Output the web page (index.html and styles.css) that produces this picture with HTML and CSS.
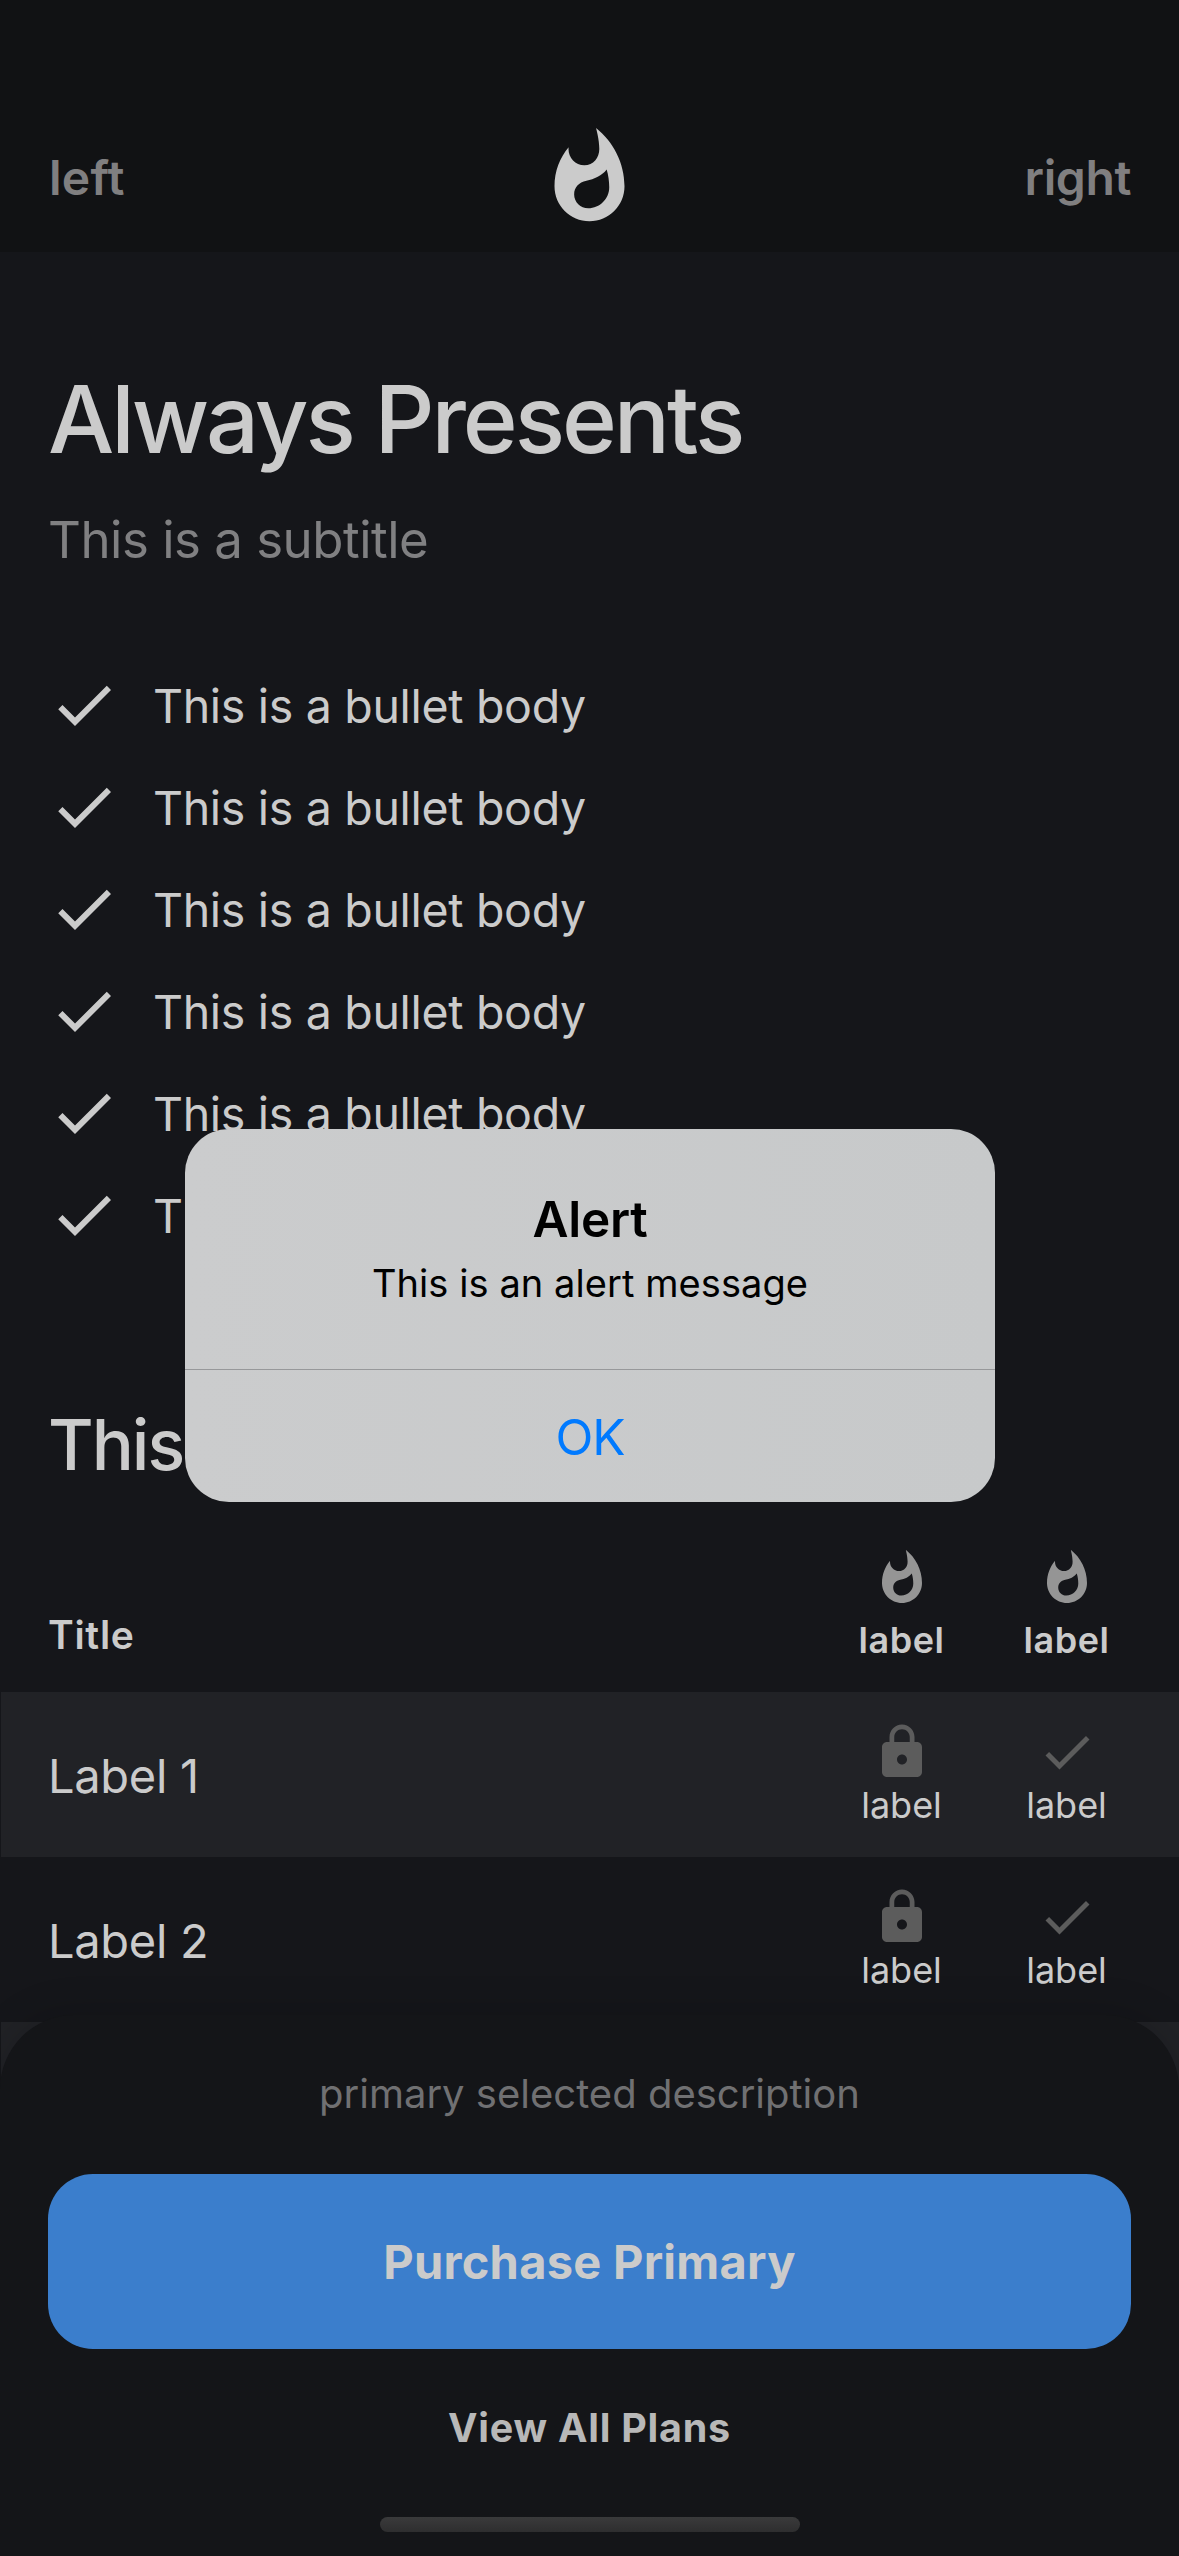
FILE: index.html
```html
<!DOCTYPE html>
<html lang="en">
<head>
<meta charset="utf-8">
<title>Always Presents</title>
<link rel="stylesheet" href="styles.css">
</head>
<body>
<svg class="defs" aria-hidden="true">
  <symbol id="flame" viewBox="0 0 24 24"><path d="M13.5.67s.74 2.65.74 4.8c0 2.06-1.35 3.73-3.41 3.73-2.07 0-3.63-1.67-3.63-3.73l.03-.36C5.21 7.51 4 10.62 4 14c0 4.42 3.58 8 8 8s8-3.58 8-8C20 8.61 17.41 3.8 13.5.67zM11.71 19c-1.78 0-3.22-1.4-3.22-3.14 0-1.62 1.05-2.76 2.81-3.12 1.77-.36 3.6-1.21 4.62-2.58.39 1.29.59 2.65.59 4.04 0 2.65-2.15 4.8-4.8 4.8z"/></symbol>
  <symbol id="check" viewBox="0 0 24 24"><path d="M9 16.17 4.83 12l-1.42 1.41L9 19 21 7l-1.41-1.41z"/></symbol>
  <symbol id="lock" viewBox="0 0 24 24"><path d="M18 8h-1V6c0-2.76-2.24-5-5-5S7 3.24 7 6v2H6c-1.1 0-2 .9-2 2v10c0 1.1.9 2 2 2h12c1.1 0 2-.9 2-2V10c0-1.1-.9-2-2-2zm-6 9c-1.1 0-2-.9-2-2s.9-2 2-2 2 .9 2 2-.9 2-2 2zm3.1-9H8.9V6c0-1.71 1.39-3.1 3.1-3.1 1.71 0 3.1 1.39 3.1 3.1v2z"/></symbol>
</svg>
<div class="screen">
  <header class="nav">
    <span class="nav-item">left</span>
    <svg class="logo"><use href="#flame"/></svg>
    <span class="nav-item nav-right">right</span>
  </header>

  <main>
    <section class="intro">
      <h1>Always Presents</h1>
      <p class="subtitle">This is a subtitle</p>
      <ul class="bullets">
        <li><svg class="bullet-icon"><use href="#check"/></svg><span>This is a bullet body</span></li>
        <li><svg class="bullet-icon"><use href="#check"/></svg><span>This is a bullet body</span></li>
        <li><svg class="bullet-icon"><use href="#check"/></svg><span>This is a bullet body</span></li>
        <li><svg class="bullet-icon"><use href="#check"/></svg><span>This is a bullet body</span></li>
        <li><svg class="bullet-icon"><use href="#check"/></svg><span>This is a bullet body</span></li>
        <li><svg class="bullet-icon"><use href="#check"/></svg><span>This is a bullet body</span></li>
      </ul>
      <h2>This</h2>
    </section>

    <section class="table">
      <div class="row head">
        <span class="name">Title</span>
        <span class="cell"><svg><use href="#flame"/></svg>label</span>
        <span class="cell"><svg><use href="#flame"/></svg>label</span>
      </div>
      <div class="row shaded">
        <span class="name">Label 1</span>
        <span class="cell"><svg><use href="#lock"/></svg>label</span>
        <span class="cell"><svg><use href="#check"/></svg>label</span>
      </div>
      <div class="row">
        <span class="name">Label 2</span>
        <span class="cell"><svg><use href="#lock"/></svg>label</span>
        <span class="cell"><svg><use href="#check"/></svg>label</span>
      </div>
      <div class="row shaded"></div>
    </section>
  </main>

  <footer class="sheet">
    <p class="desc">primary selected description</p>
    <button class="buy">Purchase Primary</button>
    <a class="plans">View All Plans</a>
    <div class="home"></div>
  </footer>

  <div class="alert" role="alertdialog">
    <div class="alert-body">
      <strong>Alert</strong>
      <p>This is an alert message</p>
    </div>
    <button class="alert-ok">OK</button>
  </div>
</div>
</body>
</html>
```
FILE: styles.css
```css
* { box-sizing: border-box; }

body {
  margin: 0;
  background: #15161a;
  color: #cbcbcb;
  font-family: Inter, "Liberation Sans", sans-serif;
}

h1, h2, p, ul { margin: 0; padding: 0; }
h1, h2 { font-weight: 500; }
svg { display: block; fill: currentColor; }
button { border: 0; font-family: inherit; }

.defs { position: absolute; width: 0; height: 0; }

.screen {
  position: relative;
  width: 1179px;
  height: 2556px;
  overflow: hidden;
}

/* Navigation bar */
.nav {
  display: grid;
  grid-template-columns: 1fr 105px 1fr;
  align-items: center;
  height: 252px;
  padding: 103px 48px 0;
  background: #111214;
}
.logo { width: 105px; height: 105px; }
.nav-item {
  padding-left: 1px;
  color: #807f80;
  font-size: 48px;
  font-weight: 600;
  line-height: 58px;
  letter-spacing: 0.23px;
}
.nav-right { justify-self: end; letter-spacing: -0.4px; }

/* Intro */
.intro { padding: 109px 48px 0; }
h1 {
  font-size: 93.5px;
  line-height: 116px;
  letter-spacing: -3.06px;
}
.subtitle {
  margin-top: 32px;
  color: #808082;
  font-size: 51px;
  line-height: 61px;
  letter-spacing: -0.51px;
}
.bullets {
  display: flex;
  flex-direction: column;
  gap: 30px;
  margin: 99px 0 150px;
  list-style: none;
}
.bullets li {
  display: flex;
  align-items: center;
  gap: 33px;
  height: 72px;
  font-size: 46.5px;
  line-height: 72px;
  letter-spacing: -0.32px;
}
.bullets span { padding-top: 1px; }
.bullet-icon { width: 72px; height: 72px; }
h2 {
  font-size: 70px;
  line-height: 87px;
  letter-spacing: -2px;
}

/* Comparison table */
.table { margin-top: 30px; }
.row {
  display: grid;
  grid-template-columns: 1fr 165px 165px;
  align-items: center;
  height: 165px;
  padding: 0 30px 0 48px;
}
.shaded {
  margin-left: 1px;
  padding-left: 47px;
  background: #212226;
}
.name {
  padding-top: 1px;
  font-size: 47px;
  letter-spacing: -0.3px;
}
.cell {
  display: flex;
  flex-direction: column;
  align-items: center;
  font-size: 36px;
  line-height: 45px;
}
.cell svg { width: 60px; height: 60px; margin-bottom: 1px; color: #5c5c5c; }
.row:not(.head) .cell { padding-top: 1px; }
.head { height: 174px; font-weight: 600; }
.head .name {
  align-self: end;
  padding-bottom: 34px;
  font-size: 39px;
  line-height: 46px;
  letter-spacing: 0.7px;
}
.head .cell { gap: 9px; padding-top: 1px; letter-spacing: 0.5px; }
.head .cell svg { color: #959595; }

/* Purchase sheet, floating over the scrolled table */
.sheet {
  position: absolute;
  inset: 2015px 0 0;
  display: flex;
  flex-direction: column;
  align-items: center;
  padding: 55px 48px 0;
  border-radius: 74px 74px 0 0;
  background: #141518;
  box-shadow: 0 0 40px rgba(0, 0, 0, 0.18);
}
.desc {
  color: #707072;
  font-size: 40px;
  line-height: 48px;
}
.buy {
  width: 1083px;
  height: 175px;
  margin-top: 56px;
  border-radius: 45px;
  background: #3b7ecc;
  color: #cbcbcb;
  font-size: 47px;
  font-weight: 700;
  letter-spacing: 0.26px;
}
.plans {
  margin-top: 55px;
  color: #b8b8b8;
  font-size: 39.5px;
  font-weight: 700;
  line-height: 48px;
  letter-spacing: 0.75px;
}
.home {
  width: 420px;
  height: 15px;
  margin-top: 65px;
  border-radius: 8px;
  background: linear-gradient(#3a3a3b, #2e2e2f);
}

/* Alert dialog */
.alert {
  position: absolute;
  top: 1129px;
  left: 185px;
  width: 810px;
  height: 373px;
  display: flex;
  flex-direction: column;
  overflow: hidden;
  border-radius: 44px;
  background: linear-gradient(90deg, #cbcccd, #c7c9ca);
  color: #000;
  text-align: center;
}
.alert-body {
  height: 241px;
  padding-top: 60px;
  border-bottom: 1px solid #97989a;
}
.alert-body strong {
  display: block;
  font-size: 49.5px;
  font-weight: 600;
  line-height: 60px;
  letter-spacing: -0.3px;
}
.alert-body p {
  margin-top: 10px;
  font-size: 38px;
  line-height: 48px;
  letter-spacing: 0.07px;
}
.alert-ok {
  flex: 1;
  padding: 1px 0 0;
  background: none;
  color: #007aff;
  font-size: 49.5px;
  letter-spacing: -1.15px;
}
```
